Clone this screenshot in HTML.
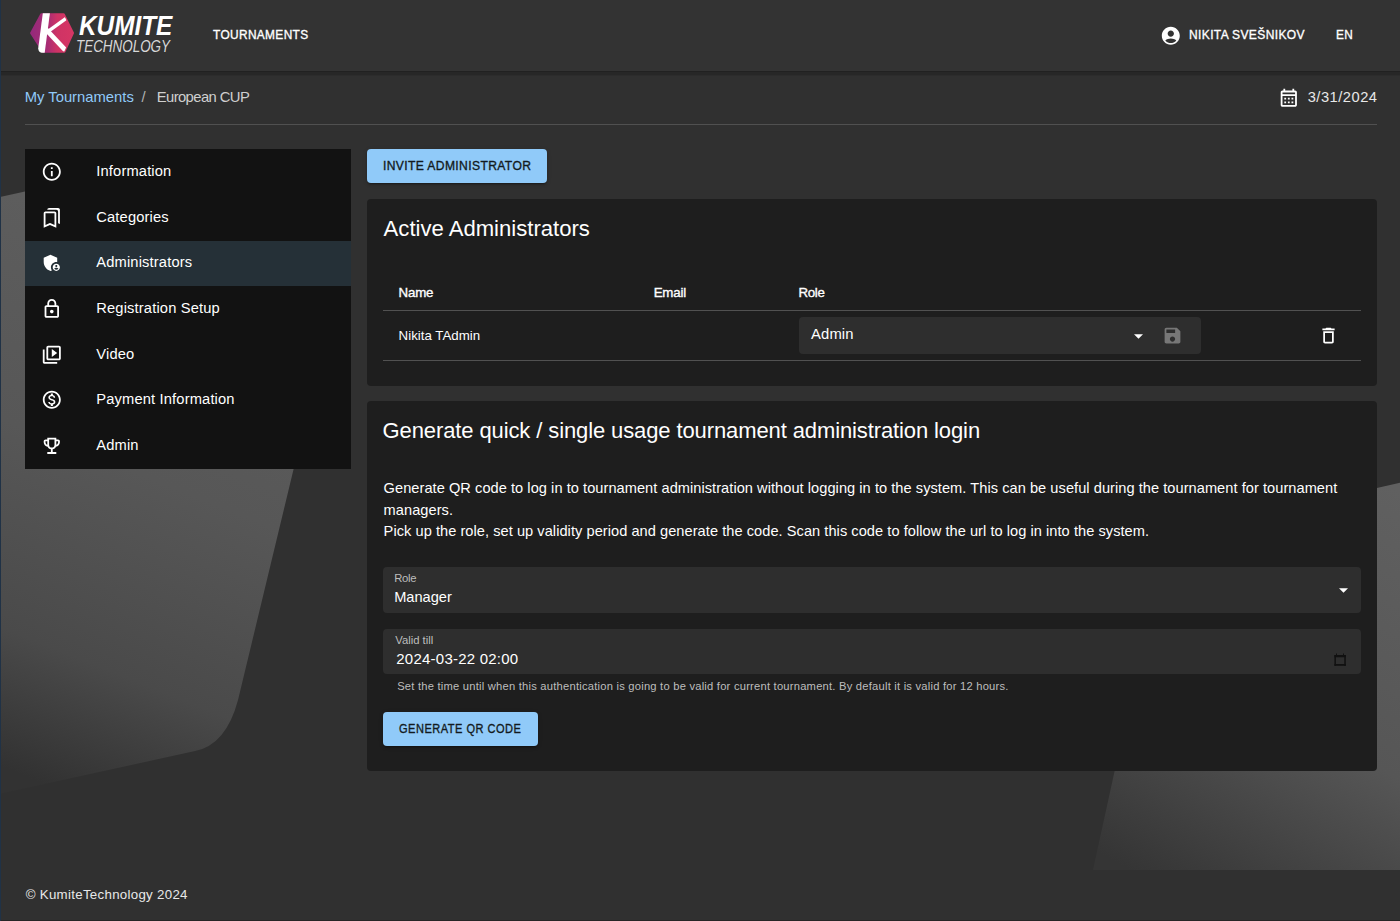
<!DOCTYPE html>
<html>
<head>
<meta charset="utf-8">
<style>
html,body{margin:0;padding:0;}
body{width:1400px;height:921px;overflow:hidden;position:relative;background:#303030;font-family:"Liberation Sans",sans-serif;color:#fff;}
.a{position:absolute;}
.t{position:absolute;white-space:nowrap;line-height:1;font-family:"Liberation Sans",sans-serif;}
.b{font-weight:700;}
.m{font-weight:400;-webkit-text-stroke:0.35px currentColor;}
</style>
</head>
<body>
<!-- background shapes -->
<svg class="a" style="left:0;top:0" width="1400" height="921" viewBox="0 0 1400 921">
  <defs>
    <linearGradient id="g1" gradientUnits="userSpaceOnUse" x1="300" y1="190" x2="60" y2="790">
      <stop offset="0" stop-color="#606060"/>
      <stop offset="0.5" stop-color="#575757"/>
      <stop offset="0.8" stop-color="#4a4a4a"/>
      <stop offset="1" stop-color="#323232"/>
    </linearGradient>
    <linearGradient id="g2" gradientUnits="userSpaceOnUse" x1="1130" y1="870" x2="1356" y2="466">
      <stop offset="0" stop-color="#353535"/>
      <stop offset="0.454" stop-color="#565656"/>
      <stop offset="1" stop-color="#606060"/>
    </linearGradient>
  </defs>
  <path d="M-400 285 L200 153 L303 430 L238 700 Q226 745 195 751 L-110 818 Z" fill="url(#g1)"/>
  <path d="M1166 536 L1500 460 L1500 870 L1093 870 Z" fill="url(#g2)"/>
  <rect x="0" y="870" width="1400" height="51" fill="#303030"/>
</svg>


<!-- header -->
<div class="a" style="left:0;top:0;width:1400px;height:71px;background:#333333"></div>
<div class="a" style="left:0;top:71px;width:1400px;height:1px;background:#212121"></div>
<div class="a" style="left:0;top:72px;width:1400px;height:3px;background:#272727"></div>
<div class="a" style="left:0;top:75px;width:1400px;height:1px;background:#2c2c2c"></div>
<!-- logo -->
<svg class="a" style="left:26px;top:8px" width="54" height="50" viewBox="26 8 54 50">
  <defs>
    <linearGradient id="lg" gradientUnits="userSpaceOnUse" x1="30" y1="0" x2="74" y2="0">
      <stop offset="0" stop-color="#93297b"/>
      <stop offset="0.4" stop-color="#a82c74"/>
      <stop offset="0.62" stop-color="#cf3365"/>
      <stop offset="1" stop-color="#d63664"/>
    </linearGradient>
    <clipPath id="hc"><path d="M31.3 33.1 L41.4 14.4 L63.6 14.4 L72.8 33 L64.3 51.5 L43.2 51.5 Z" stroke="#000" stroke-width="2.4" stroke-linejoin="round"/></clipPath>
  </defs>
  <path d="M31.3 33.1 L41.4 14.4 L63.6 14.4 L72.8 33 L64.3 51.5 L43.2 51.5 Z" fill="url(#lg)" stroke="url(#lg)" stroke-width="2.4" stroke-linejoin="round"/>
  <g fill="#fff">
    <path d="M42.8 13.2 L49.9 13.2 L44.7 52.7 L41.5 52.7 Q38.6 52.4 38.2 48.5 Z"/>
    <path d="M46 30.7 L72 12 L72 16.3 L46 35 Z" clip-path="url(#hc)"/>
    <path d="M41.3 28 L47.9 28 L74.1 56 L67.5 56 Z" clip-path="url(#hc)"/>
  </g>
</svg>
<div class="t b" style="left:79px;top:11px;font-size:28.3px;font-style:italic;transform:scaleX(0.86);transform-origin:0 0;">KUMITE</div>
<div class="t" style="left:76px;top:39px;font-size:16.8px;font-style:italic;color:#d8d8d8;transform:scaleX(0.80);transform-origin:0 0;">TECHNOLOGY</div>

<div class="t m" style="left:212.9px;top:27.8px;font-size:13.1px;letter-spacing:0.4px;transform:scaleX(0.907);transform-origin:0 0">TOURNAMENTS</div>
<!-- user icon -->
<svg class="a" style="left:1160px;top:24.8px" width="21.6" height="21.6" viewBox="0 0 24 24"><path fill="#fff" d="M12 2C6.48 2 2 6.48 2 12s4.48 10 10 10 10-4.48 10-10S17.52 2 12 2m0 4c1.93 0 3.5 1.57 3.5 3.5S13.93 13 12 13s-3.5-1.57-3.5-3.5S10.07 6 12 6m0 14c-2.03 0-4.43-.82-6.14-2.88C7.55 15.8 9.68 15 12 15s4.45.8 6.14 2.12C16.43 19.18 14.03 20 12 20"/></svg>
<div class="t m" style="left:1188.6px;top:28.1px;font-size:13.1px;letter-spacing:0.4px;transform:scaleX(0.918);transform-origin:0 0">NIKITA SVEŠNIKOV</div>
<div class="t m" style="left:1335.9px;top:28.1px;font-size:13.1px;letter-spacing:0.4px;transform:scaleX(0.897);transform-origin:0 0">EN</div>

<!-- breadcrumb -->
<div class="t" style="left:24.7px;top:89.5px;font-size:14.8px;color:#90caf9">My Tournaments</div>
<div class="t" style="left:141.6px;top:89.5px;font-size:14.8px;color:#b3b3b3">/</div>
<div class="t" style="left:156.7px;top:89.5px;font-size:14.8px;letter-spacing:-0.58px;color:#cfcfcf">European CUP</div>
<!-- date -->
<svg class="a" style="left:1278px;top:86.8px" width="21.6" height="21.6" viewBox="0 0 24 24"><path fill="#fff" d="M19 4h-1V2h-2v2H8V2H6v2H5c-1.11 0-1.99.9-1.99 2L3 20c0 1.1.89 2 2 2h14c1.1 0 2-.9 2-2V6c0-1.1-.9-2-2-2m0 16H5V10h14zm0-12H5V6h14zM9 14H7v-2h2zm4 0h-2v-2h2zm4 0h-2v-2h2zm-8 4H7v-2h2zm4 0h-2v-2h2zm4 0h-2v-2h2z"/></svg>
<div class="t" style="left:1307.7px;top:89.6px;font-size:14.7px;letter-spacing:0.5px;color:#e8e8e8">3/31/2024</div>
<div class="a" style="left:25px;top:124px;width:1352px;height:1px;background:#505050"></div>

<!-- sidebar -->
<div class="a" style="left:25px;top:148.7px;width:326px;height:320px;background:#121212"></div>
<div class="a" style="left:25px;top:240.8px;width:326px;height:45.4px;background:#253037"></div>
<div class="t" style="left:96.3px;top:164px;font-size:14.7px;letter-spacing:0.15px">Information</div>
<div class="t" style="left:96.3px;top:210px;font-size:14.7px;letter-spacing:0.15px">Categories</div>
<div class="t" style="left:96.3px;top:255px;font-size:14.7px;letter-spacing:0.15px">Administrators</div>
<div class="t" style="left:96.3px;top:301px;font-size:14.7px;letter-spacing:0.15px">Registration Setup</div>
<div class="t" style="left:96.3px;top:347px;font-size:14.7px;letter-spacing:0.15px">Video</div>
<div class="t" style="left:96.3px;top:392px;font-size:14.7px;letter-spacing:0.15px">Payment Information</div>
<div class="t" style="left:96.3px;top:438px;font-size:14.7px;letter-spacing:0.15px">Admin</div>

<!-- sidebar icons -->
<svg class="a" style="left:41px;top:160.9px" width="21.6" height="21.6" viewBox="0 0 24 24"><path fill="#fff" d="M11 7h2v2h-2zm0 4h2v6h-2zm1-9C6.48 2 2 6.48 2 12s4.48 10 10 10 10-4.48 10-10S17.52 2 12 2m0 18c-4.41 0-8-3.59-8-8s3.59-8 8-8 8 3.59 8 8-3.59 8-8 8"/></svg>
<svg class="a" style="left:41px;top:206.6px" width="21.6" height="21.6" viewBox="0 0 24 24"><path fill="#fff" d="M15 7v12.97l-4.21-1.81-.79-.34-.79.34L5 19.97V7zm4-6H8.99C7.89 1 7 1.9 7 3h10c1.1 0 2 .9 2 2v13l2 1V3c0-1.1-.9-2-2-2m-4 4H5c-1.1 0-2 .9-2 2v16l7-3 7 3V7c0-1.1-.9-2-2-2"/></svg>
<svg class="a" style="left:41px;top:252.2px" width="21.6" height="21.6" viewBox="0 0 24 24"><path fill="#fff" d="M17 11c.34 0 .67.04 1 .09V6.27L10.5 3 3 6.27v4.91c0 4.54 3.2 8.79 7.5 9.82.55-.13 1.08-.32 1.6-.55-.69-.98-1.1-2.17-1.1-3.45 0-3.31 2.69-6 6-6"/><path fill="#fff" d="M17 13c-2.21 0-4 1.79-4 4s1.79 4 4 4 4-1.79 4-4-1.79-4-4-4m0 1.38c.62 0 1.12.51 1.12 1.12s-.51 1.12-1.12 1.12-1.12-.51-1.12-1.12.5-1.12 1.12-1.12m0 5.37c-.93 0-1.74-.46-2.24-1.17.05-.72 1.51-1.08 2.24-1.08s2.19.36 2.24 1.08c-.5.71-1.31 1.17-2.24 1.17"/></svg>
<svg class="a" style="left:41px;top:297.9px" width="21.6" height="21.6" viewBox="0 0 24 24"><path fill="#fff" d="M18 8h-1V6c0-2.76-2.24-5-5-5S7 3.24 7 6v2H6c-1.1 0-2 .9-2 2v10c0 1.1.9 2 2 2h12c1.1 0 2-.9 2-2V10c0-1.1-.9-2-2-2M9 6c0-1.66 1.34-3 3-3s3 1.34 3 3v2H9zm9 14H6V10h12zm-6-3c1.1 0 2-.9 2-2s-.9-2-2-2-2 .9-2 2 .9 2 2 2"/></svg>
<svg class="a" style="left:41px;top:343.6px" width="21.6" height="21.6" viewBox="0 0 24 24"><path fill="#fff" d="M4 6H2v14c0 1.1.9 2 2 2h14v-2H4zm16-4H8c-1.1 0-2 .9-2 2v12c0 1.1.9 2 2 2h12c1.1 0 2-.9 2-2V4c0-1.1-.9-2-2-2m0 14H8V4h12zM12 5.5v9l6-4.5z"/></svg>
<svg class="a" style="left:41px;top:389.3px" width="21.6" height="21.6" viewBox="0 0 24 24"><path fill="#fff" d="M12 2C6.48 2 2 6.48 2 12s4.48 10 10 10 10-4.48 10-10S17.52 2 12 2m0 18c-4.41 0-8-3.59-8-8s3.59-8 8-8 8 3.59 8 8-3.59 8-8 8m.31-8.86c-1.77-.45-2.34-.94-2.34-1.67 0-.84.79-1.43 2.1-1.43 1.38 0 1.9.66 1.94 1.64h1.71c-.05-1.34-.87-2.57-2.49-2.97V5H10.9v1.69c-1.51.32-2.72 1.3-2.72 2.81 0 1.79 1.49 2.69 3.66 3.21 1.95.46 2.34 1.15 2.34 1.87 0 .53-.39 1.39-2.1 1.39-1.6 0-2.23-.72-2.32-1.64H8.04c.1 1.7 1.36 2.66 2.86 2.97V19h2.34v-1.67c1.52-.29 2.72-1.16 2.73-2.77-.01-2.2-1.9-2.96-3.66-3.42"/></svg>
<svg class="a" style="left:41px;top:434.9px" width="21.6" height="21.6" viewBox="0 0 24 24"><path fill="#fff" d="M19 5h-2V3H7v2H5c-1.1 0-2 .9-2 2v1c0 2.55 1.92 4.63 4.39 4.94.63 1.5 1.98 2.63 3.61 2.96V19H7v2h10v-2h-4v-3.1c1.63-.33 2.98-1.46 3.61-2.96C19.08 12.63 21 10.55 21 8V7c0-1.1-.9-2-2-2M5 8V7h2v3.82C5.84 10.4 5 9.3 5 8m7 6c-1.65 0-3-1.35-3-3V5h6v6c0 1.65-1.35 3-3 3m7-6c0 1.3-.84 2.4-2 2.82V7h2z"/></svg>

<!-- invite button -->
<div class="a" style="left:367px;top:149px;width:180px;height:34px;border-radius:4px;background:#90caf9;box-shadow:0 3px 1px -2px rgba(0,0,0,0.2),0 2px 2px 0 rgba(0,0,0,0.14),0 1px 5px 0 rgba(0,0,0,0.12)"></div>
<div class="t m" style="left:382.6px;top:158.9px;font-size:13.2px;letter-spacing:0.4px;transform:scaleX(0.919);transform-origin:0 0;color:#131a20">INVITE ADMINISTRATOR</div>

<!-- card 1 -->
<div class="a" style="left:367px;top:199.4px;width:1010px;height:186.3px;border-radius:4px;background:#1e1e1e"></div>
<div class="t" style="left:383.6px;top:218px;font-size:22.1px">Active Administrators</div>
<div class="t m" style="left:398.6px;top:285.8px;font-size:13.3px;letter-spacing:-0.23px">Name</div>
<div class="t m" style="left:653.7px;top:285.8px;font-size:13.3px;letter-spacing:-0.2px">Email</div>
<div class="t m" style="left:798.5px;top:285.8px;font-size:13.3px;letter-spacing:-0.33px">Role</div>
<div class="a" style="left:383px;top:310px;width:978px;height:1px;background:#515151"></div>
<div class="t" style="left:398.6px;top:328.7px;font-size:13.3px">Nikita TAdmin</div>
<div class="a" style="left:799px;top:317px;width:402px;height:36.5px;border-radius:4px;background:#2e2e2e"></div>
<div class="t" style="left:811px;top:326.7px;font-size:14.8px;letter-spacing:0.15px">Admin</div>
<svg class="a" style="left:1134.3px;top:333.6px" width="9" height="5" viewBox="0 0 10 5"><path fill="#fff" d="M0 0 L10 0 L5 5 Z"/></svg>
<svg class="a" style="left:1162px;top:325px" width="21" height="21" viewBox="0 0 24 24"><path fill="#777" d="M17 3H5c-1.11 0-2 .9-2 2v14c0 1.1.89 2 2 2h14c1.1 0 2-.9 2-2V7zm-5 16c-1.66 0-3-1.34-3-3s1.34-3 3-3 3 1.34 3 3-1.34 3-3 3m3-10H5V5h10z"/></svg>
<svg class="a" style="left:1318px;top:325px" width="21" height="21" viewBox="0 0 24 24"><path fill="#fff" d="M6 19c0 1.1.9 2 2 2h8c1.1 0 2-.9 2-2V7H6zM8 9h8v10H8zm7.5-5-1-1h-5l-1 1H5v2h14V4z"/></svg>
<div class="a" style="left:383px;top:360px;width:978px;height:1px;background:#515151"></div>

<!-- card 2 -->
<div class="a" style="left:367px;top:401.2px;width:1010px;height:369.8px;border-radius:4px;background:#1e1e1e"></div>
<div class="t" style="left:382.6px;top:420px;font-size:22px;letter-spacing:-0.11px">Generate quick / single usage tournament administration login</div>
<div class="t" style="left:383.6px;top:480.5px;font-size:14.6px;letter-spacing:0.05px">Generate QR code to log in to tournament administration without logging in to the system. This can be useful during the tournament for tournament</div>
<div class="t" style="left:383.6px;top:503px;font-size:14.6px;letter-spacing:0.05px">managers.</div>
<div class="t" style="left:383.6px;top:523.9px;font-size:14.6px;letter-spacing:0.05px">Pick up the role, set up validity period and generate the code. Scan this code to follow the url to log in into the system.</div>

<div class="a" style="left:383px;top:567px;width:978px;height:45.6px;border-radius:4px;background:#2e2e2e"></div>
<div class="t" style="left:394.2px;top:572.6px;font-size:11.3px;letter-spacing:-0.3px;color:#bdbdbd">Role</div>
<div class="t" style="left:394.2px;top:589.5px;font-size:14.6px">Manager</div>
<svg class="a" style="left:1338.6px;top:587.5px" width="9" height="5" viewBox="0 0 10 5"><path fill="#fff" d="M0 0 L10 0 L5 5 Z"/></svg>

<div class="a" style="left:383px;top:629px;width:978px;height:44.5px;border-radius:4px;background:#2e2e2e"></div>
<div class="t" style="left:395.2px;top:635px;font-size:11.3px;color:#bdbdbd">Valid till</div>
<div class="t" style="left:396.3px;top:651px;font-size:15px;letter-spacing:0.23px">2024-03-22 02:00</div>
<svg class="a" style="left:1334px;top:653px" width="12" height="13" viewBox="0 0 12 13"><g fill="#111"><rect x="2" y="0.5" width="1" height="2"/><rect x="9" y="0.5" width="1" height="2"/><rect x="0.4" y="2" width="11.4" height="2.3"/><rect x="0.4" y="2" width="1.5" height="10.8"/><rect x="10.3" y="2" width="1.5" height="10.8"/><rect x="0.4" y="11" width="11.4" height="1.8"/></g></svg>
<div class="t" style="left:397.2px;top:681px;font-size:11.2px;letter-spacing:0.22px;color:#bdbdbd">Set the time until when this authentication is going to be valid for current tournament. By default it is valid for 12 hours.</div>

<div class="a" style="left:383.3px;top:712px;width:154.6px;height:34px;border-radius:4px;background:#90caf9;box-shadow:0 3px 1px -2px rgba(0,0,0,0.2),0 2px 2px 0 rgba(0,0,0,0.14),0 1px 5px 0 rgba(0,0,0,0.12)"></div>
<div class="t m" style="left:399.4px;top:722.1px;font-size:13.2px;letter-spacing:0.6px;transform:scaleX(0.836);transform-origin:0 0;color:#131a20">GENERATE QR CODE</div>

<!-- footer -->
<div class="t" style="left:25.7px;top:888px;font-size:13.3px;letter-spacing:0.29px;color:#e8e8e8">© KumiteTechnology 2024</div>
<div class="a" style="left:0;top:920px;width:1400px;height:1px;background:#262626"></div>
<div class="a" style="left:0;top:0;width:1px;height:921px;background:#203246"></div>
</body>
</html>
